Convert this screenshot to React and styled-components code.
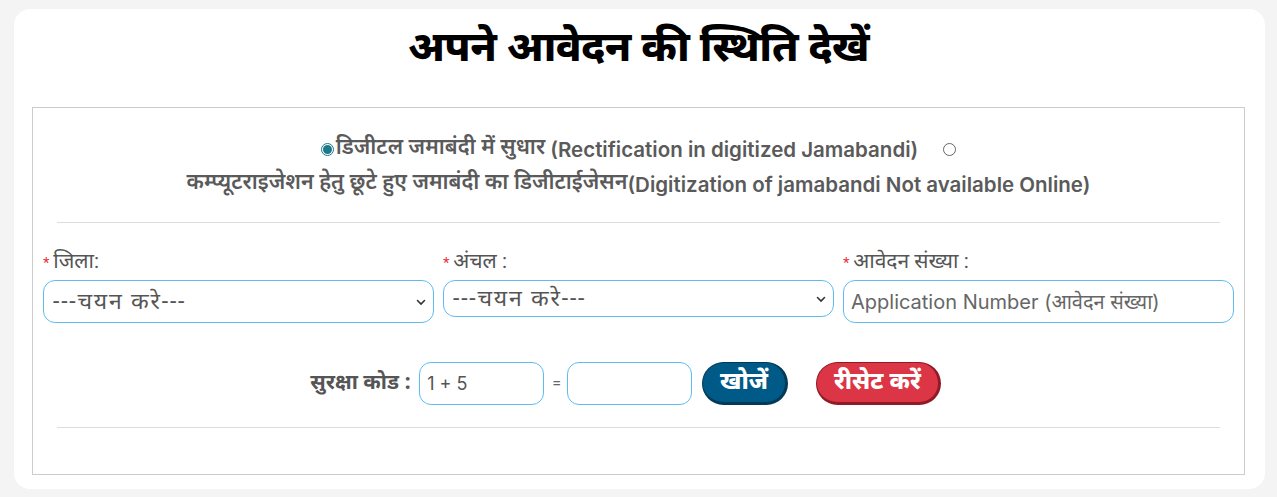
import React from 'react';
import styled, { createGlobalStyle } from 'styled-components';

const GlobalStyle = createGlobalStyle`
    * { box-sizing: border-box; }
    body {
        margin: 0;
        background: #f4f4f4;
        font-family: "Roboto", "Noto Sans Devanagari", "Noto Sans", sans-serif;
        color: #555;
    }
`;

const Page = styled.div`
    padding: 9px 12px 10px 14px;
`;

const Card = styled.div`
    background: #fff;
    border-radius: 16px;
    padding: 0 20px 14px 18px;
`;

const Title = styled.h1`
    margin: 0;
    height: 98px;
    display: flex;
    align-items: center;
    justify-content: center;
    padding-bottom: 16px;
    font-family: "Noto Sans Devanagari", "Noto Sans", sans-serif;
    font-size: 42px;
    font-weight: 800;
    color: #000;
    letter-spacing: -0.5px;
`;

const Box = styled.div`
    border: 1px solid #ccc;
    padding: 0 10px 46px;
`;

const Divider = styled.hr`
    border: 0;
    border-top: 1px solid #ddd;
    margin: ${p => p.$top}px 14px 0;
`;

const Choices = styled.div`
    padding-top: 24px;
    display: flex;
    flex-direction: column;
    align-items: center;
    font-family: "Inter", "Noto Sans Devanagari", sans-serif;
    font-size: 20.5px;
    font-weight: 600;
    color: #5a5a5a;
    line-height: 35px;
`;

const ChoiceLine = styled.div`
    display: flex;
    align-items: center;
    white-space: nowrap;
`;

const Hindi = styled.span`
    font-family: "Noto Sans Devanagari", sans-serif;
    font-size: 21.5px;
`;

const Radio = styled.span`
    width: 13px;
    height: 13px;
    border-radius: 50%;
    border: 1px solid ${p => (p.$on ? '#1a7a8a' : '#666')};
    margin: 0 ${p => p.$gap}px 0 0;
    margin-left: ${p => p.$left || 0}px;
    display: inline-flex;
    align-items: center;
    justify-content: center;
    &::after {
        content: '';
        width: 9px;
        height: 9px;
        border-radius: 50%;
        background: ${p => (p.$on ? '#1a7a8a' : 'transparent')};
    }
`;

const Fields = styled.div`
    margin-top: 25px;
    display: grid;
    grid-template-columns: repeat(3, 1fr);
    column-gap: 9px;
    align-items: start;
`;

const Field = styled.div`
    display: flex;
    flex-direction: column;
`;

const Label = styled.label`
    font-size: 21px;
    line-height: 26px;
    height: 26px;
    margin-bottom: 6px;
    color: #555;
    &::before {
        content: '* ';
        color: #e4343e;
        font-size: 15px;
    }
`;

const SelectWrap = styled.div`
    position: relative;
`;

const Select = styled.select`
    appearance: none;
    width: 100%;
    height: ${p => p.$h}px;
    border: 1px solid #5ebcf2;
    border-radius: 12px;
    background: #fff;
    padding: 0 30px 0 9px;
    font-family: "Roboto", "Noto Sans Devanagari", sans-serif;
    font-size: 23px;
    letter-spacing: 1.8px;
    color: #555;
    outline: none;
`;

const Chevron = styled.svg`
    position: absolute;
    right: 8px;
    top: 50%;
    transform: translateY(-50%);
    width: 10px;
    height: 10px;
    pointer-events: none;
`;

const TextInput = styled.input`
    width: ${p => (p.$w ? `${p.$w}px` : '100%')};
    height: 43px;
    border: 1px solid #5ebcf2;
    border-radius: 12px;
    padding: 0 7px;
    font-family: "Inter", "Noto Sans Devanagari", sans-serif;
    font-size: ${p => p.$fs || 18}px;
    color: #555;
    outline: none;
    &::placeholder {
        color: #666;
    }
`;

const Captcha = styled.div`
    margin-top: 39px;
    display: flex;
    align-items: center;
    justify-content: center;
    padding-right: 26px;
`;

const CaptchaLabel = styled.span`
    font-family: "Noto Sans Devanagari", sans-serif;
    font-size: 21px;
    font-weight: 700;
    color: #555;
    margin-right: 8px;
`;

const Equals = styled.span`
    font-size: 16px;
    color: #666;
    margin: 0 6px 0 8px;
`;

const Button = styled.button`
    height: 43px;
    border-radius: 22px;
    border: 1px solid ${p => p.$dark};
    border-right-width: 3px;
    border-bottom-width: 3px;
    background: ${p => p.$bg};
    color: #fff;
    font-family: "Noto Sans Devanagari", "Noto Sans", sans-serif;
    font-size: 24px;
    font-weight: 800;
    padding: 0 ${p => p.$pad}px;
    margin-left: ${p => p.$left}px;
    display: flex;
    align-items: center;
    line-height: 1;
`;

const ChevronIcon = () => (
    <Chevron viewBox="0 0 10 10">
        <path d="M1.5 3.5 L5 7 L8.5 3.5" fill="none" stroke="#333" strokeWidth="1.6" strokeLinecap="round" />
    </Chevron>
);

export default function App() {
    return (
        <>
            <GlobalStyle />
            <Page>
                <Card>
                    <Title>अपने आवेदन की स्थिति देखें</Title>
                    <Box>
                        <Choices>
                            <ChoiceLine>
                                <Radio $on $gap={2} />
                                <Hindi>डिजीटल जमाबंदी में सुधार</Hindi>&nbsp;(Rectification in digitized Jamabandi)
                                <Radio $left={25} $gap={0} />
                            </ChoiceLine>
                            <ChoiceLine>
                                <Hindi>कम्प्यूटराइजेशन हेतु छूटे हुए जमाबंदी का डिजीटाईजेसन</Hindi>(Digitization of jamabandi Not available Online)
                            </ChoiceLine>
                        </Choices>
                        <Divider $top={20} />
                        <Fields>
                            <Field>
                                <Label>जिला:</Label>
                                <SelectWrap>
                                    <Select $h={43}>
                                        <option>---चयन करे---</option>
                                    </Select>
                                    <ChevronIcon />
                                </SelectWrap>
                            </Field>
                            <Field>
                                <Label>अंचल :</Label>
                                <SelectWrap>
                                    <Select $h={37}>
                                        <option>---चयन करे---</option>
                                    </Select>
                                    <ChevronIcon />
                                </SelectWrap>
                            </Field>
                            <Field>
                                <Label>आवेदन संख्या :</Label>
                                <TextInput $fs={20} placeholder="Application Number (आवेदन संख्या)" />
                            </Field>
                        </Fields>
                        <Captcha>
                            <CaptchaLabel>सुरक्षा कोड :</CaptchaLabel>
                            <TextInput $w={125} defaultValue="1 + 5" readOnly />
                            <Equals>=</Equals>
                            <TextInput $w={125} />
                            <Button $bg="#005a87" $dark="#023a57" $pad={17} $left={10}>खोजें</Button>
                            <Button $bg="#dc3545" $dark="#921a27" $pad={17} $left={28}>रीसेट करें</Button>
                        </Captcha>
                        <Divider $top={22} />
                    </Box>
                </Card>
            </Page>
        </>
    );
}
